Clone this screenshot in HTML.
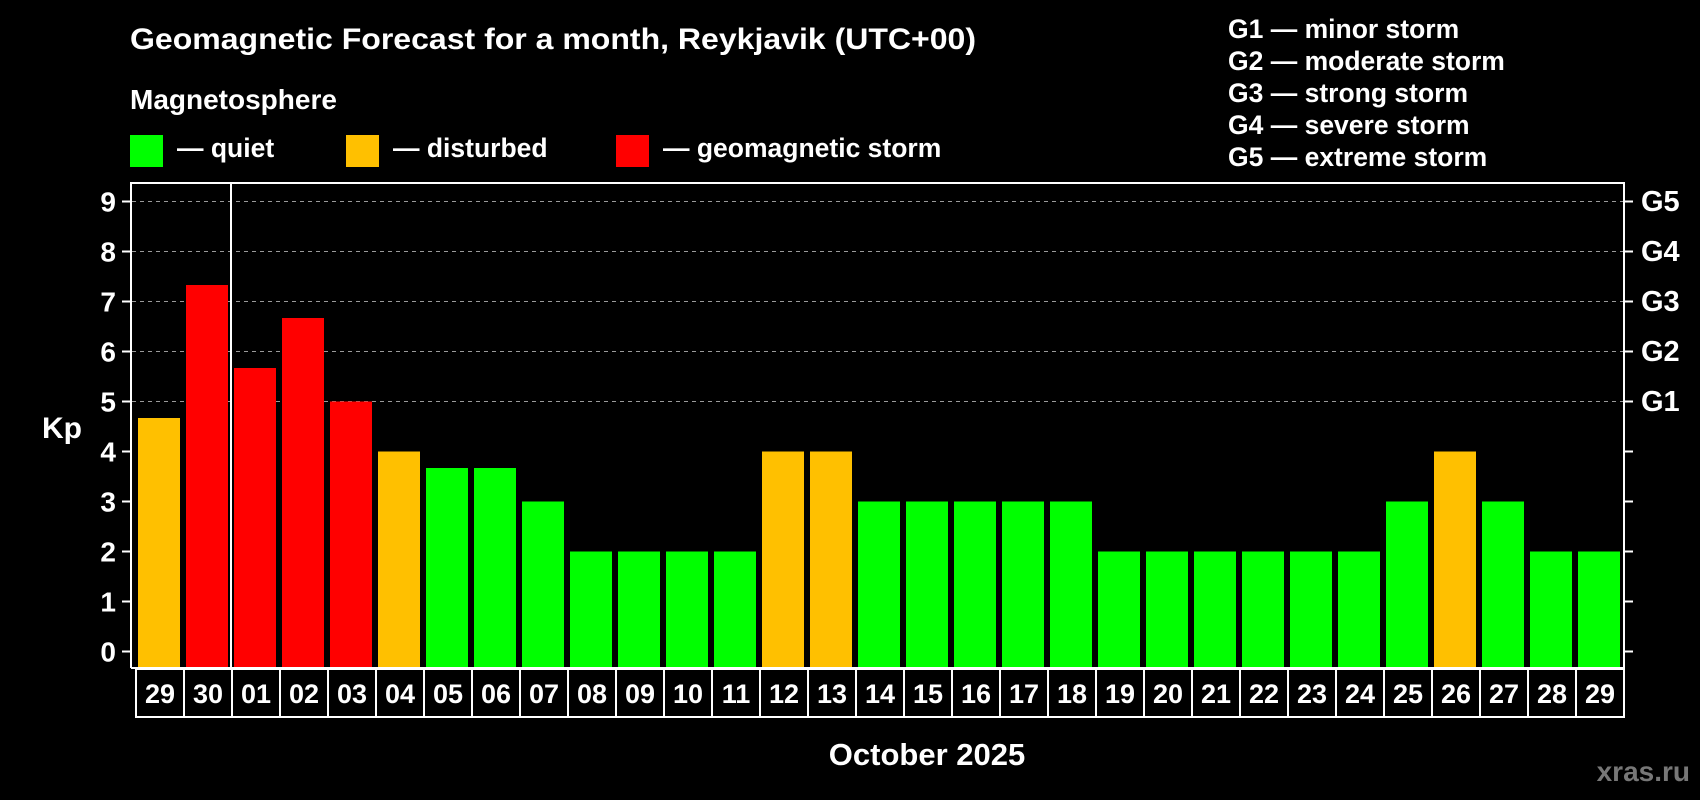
<!DOCTYPE html>
<html><head><meta charset="utf-8"><style>
html,body{margin:0;padding:0;background:#000;}
svg{display:block;font-family:"Liberation Sans",Arial,sans-serif;font-weight:bold;}
</style></head><body>
<svg width="1700" height="800" viewBox="0 0 1700 800" xmlns="http://www.w3.org/2000/svg">
<rect width="1700" height="800" fill="#000"/>
<g fill="#fff">
<text x="130" y="49" font-size="30" textLength="846" lengthAdjust="spacingAndGlyphs">Geomagnetic Forecast for a month, Reykjavik (UTC+00)</text>
<text x="130" y="109" font-size="28">Magnetosphere</text>
</g>
<rect x="130" y="135" width="33" height="32" fill="#00ff00"/>
<rect x="346" y="135" width="33" height="32" fill="#ffc000"/>
<rect x="616" y="135" width="33" height="32" fill="#ff0000"/>
<g fill="#fff" font-size="26.5">
<text x="177" y="157">— quiet</text>
<text x="393" y="157">— disturbed</text>
<text x="663" y="157">— geomagnetic storm</text>
<text x="1228" y="38">G1 — minor storm</text>
<text x="1228" y="70">G2 — moderate storm</text>
<text x="1228" y="102">G3 — strong storm</text>
<text x="1228" y="134">G4 — severe storm</text>
<text x="1228" y="166">G5 — extreme storm</text>
</g>
<g stroke="#9a9a9a" stroke-width="1" stroke-dasharray="4,4">
<line x1="132" y1="201.5" x2="1623" y2="201.5"/>
<line x1="132" y1="251.5" x2="1623" y2="251.5"/>
<line x1="132" y1="301.5" x2="1623" y2="301.5"/>
<line x1="132" y1="351.5" x2="1623" y2="351.5"/>
<line x1="132" y1="401.5" x2="1623" y2="401.5"/>
</g>
<g id="bars"></g>
<g id="fr" stroke="#fff" stroke-width="2" fill="none">
<path d="M131 668 V183 H1624 V668"/>
<line x1="131" y1="668" x2="1624" y2="668"/>
<line x1="231" y1="183" x2="231" y2="668"/>
<rect x="136" y="669" width="1488" height="48"/>
</g>
<g id="ticks" stroke="#fff" stroke-width="2"></g>
<g id="ylab" fill="#fff" font-size="28" text-anchor="end"></g>
<g fill="#fff" font-size="29">
<text x="1641" y="211">G5</text>
<text x="1641" y="261">G4</text>
<text x="1641" y="311">G3</text>
<text x="1641" y="361">G2</text>
<text x="1641" y="411">G1</text>
<text x="42" y="438" font-size="30">Kp</text>
</g>
<g id="dates" fill="#fff" font-size="27" text-anchor="middle"></g>
<text x="927" y="765" fill="#fff" font-size="31" text-anchor="middle">October 2025</text>
<text x="1690" y="781" fill="#777" font-size="28" text-anchor="end">xras.ru</text>
</svg>
<script>
var ns="http://www.w3.org/2000/svg";
var d=[["29",4.67,"#ffc000"],["30",7.33,"#ff0000"],["01",5.67,"#ff0000"],["02",6.67,"#ff0000"],["03",5,"#ff0000"],["04",4,"#ffc000"],["05",3.67,"#00ff00"],["06",3.67,"#00ff00"],["07",3,"#00ff00"],["08",2,"#00ff00"],["09",2,"#00ff00"],["10",2,"#00ff00"],["11",2,"#00ff00"],["12",4,"#ffc000"],["13",4,"#ffc000"],["14",3,"#00ff00"],["15",3,"#00ff00"],["16",3,"#00ff00"],["17",3,"#00ff00"],["18",3,"#00ff00"],["19",2,"#00ff00"],["20",2,"#00ff00"],["21",2,"#00ff00"],["22",2,"#00ff00"],["23",2,"#00ff00"],["24",2,"#00ff00"],["25",3,"#00ff00"],["26",4,"#ffc000"],["27",3,"#00ff00"],["28",2,"#00ff00"],["29",2,"#00ff00"]];
function el(t,a,p){var e=document.createElementNS(ns,t);for(var k in a)e.setAttribute(k,a[k]);p.appendChild(e);return e;}
var B=document.getElementById("bars"),D=document.getElementById("dates"),T=document.getElementById("ticks"),Y=document.getElementById("ylab"),fr=document.getElementById("fr");
d.forEach(function(r,i){var x=136+i*48;var top=651.5-r[1]*50;
el("rect",{x:x+2,y:top,width:42,height:668-top,fill:r[2]},B);
var t=el("text",{x:x+24,y:703},D);t.textContent=r[0];
if(i>0)el("line",{x1:x,y1:669,x2:x,y2:717},fr);});
for(var k=0;k<=9;k++){var y=651.5-k*50;
el("line",{x1:122,y1:y,x2:131,y2:y},T);el("line",{x1:1624,y1:y,x2:1633,y2:y},T);
var t=el("text",{x:116,y:y+10},Y);t.textContent=k;}
</script>
</body></html>
